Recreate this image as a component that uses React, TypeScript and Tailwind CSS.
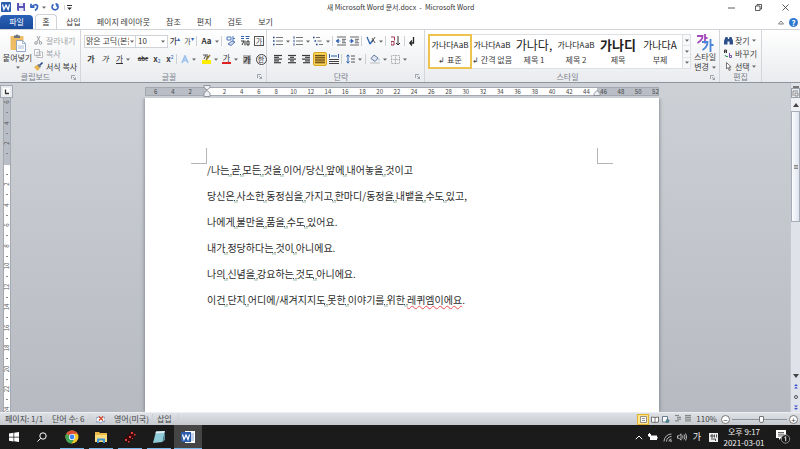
import type { ReactNode } from 'react'

const BODY_LINES = [
  '/나는 곧 모든 것을 이어/당신 앞에 내어놓을 것이고',
  '당신은 사소한 동정심을 가지고 한마디/동정을 내뱉을 수도 있고,',
  '나에게 불만을 품을 수도 있어요.',
  '내가 정당하다는 것이 아니에요.',
  '나의 신념을 강요하는 것도 아니에요.',
  '이건 단지 어디에/새겨지지도 못한 이야기를 위한 레퀴엠이에요.',
]

const TABS = ['삽입', '페이지 레이아웃', '참조', '편지', '검토', '보기']

const STYLES = [
  { sample: '가나다AaB', name: '↲ 표준', look: 'text-[8px]' },
  { sample: '가나다AaB', name: '↲ 간격 없음', look: 'text-[8px]' },
  { sample: '가나다,', name: '제목 1', look: 'text-[12px]' },
  { sample: '가나다AaB', name: '제목 2', look: 'text-[8px]' },
  { sample: '가나디', name: '제목', look: 'text-[13px] font-bold' },
  { sample: '가나다A', name: '부제', look: 'text-[10px]' },
]

const H_MARKS = Array.from({ length: 30 }, (_, i) => Math.abs(i * 2 - 6))
const V_MARKS = [6, 4, 2, 0, 2, 4, 6, 8, 10, 12, 14, 16, 18, 20, 22, 24]

function Caret() {
  return (
    <svg viewBox="0 0 4 3" className="h-[3px] w-1 shrink-0 fill-[#666]">
      <path d="M0 .5h4L2 2.8z" />
    </svg>
  )
}

function Sep() {
  return <span className="h-2.5 w-px shrink-0 bg-[#cdd0d5]" />
}

function Tool({ label, size = 'w-3.5', caret, children }: { label: string; size?: string; caret?: boolean; children: ReactNode }) {
  return (
    <button aria-label={label} className={`flex h-3.5 shrink-0 items-center justify-center gap-[3px] ${size}`}>
      {children}
      {caret && <Caret />}
    </button>
  )
}

function Group({ title, size, launcher = true, children }: { title: string; size: string; launcher?: boolean; children: ReactNode }) {
  return (
    <section className={`flex shrink-0 flex-col border-r border-[#d3d6da] ${size}`}>
      <div className="h-[42px] pt-1">{children}</div>
      <div className="flex h-[11px] items-center text-[#7a808a]">
        <span className="flex-1 text-center">{title}</span>
        {launcher && (
          <button aria-label={`${title} 옵션`} className="pr-1">
            <svg viewBox="0 0 5 5" className="size-[5px] fill-none stroke-[#8b929c]" strokeWidth=".8">
              <path d="M.5 4V.5H4M2 2l2.5 2.5M4.5 2.5v2h-2" />
            </svg>
          </button>
        )}
      </div>
    </section>
  )
}

function Lines({ rows, color = 'stroke-[#3c3c3c]' }: { rows: [number, number][]; color?: string }) {
  return (
    <svg viewBox="0 0 10 10" className={`size-2.5 ${color}`} strokeWidth="1.2">
      {rows.map(([a, b], i) => (
        <path key={i} d={`M${a} ${1.5 + i * 1.8}H${b}`} />
      ))}
    </svg>
  )
}

function ListIcon({ kind }: { kind: 'bullet' | 'number' | 'multi' }) {
  return (
    <svg viewBox="0 0 10 10" className="size-2.5" strokeWidth="1">
      {[1.5, 5, 8.5].map((y, i) => {
        const x = kind === 'multi' ? i * 1.5 : 0
        return (
          <g key={y}>
            {kind === 'number' ? (
              <path d={`M1 ${y - 1.2}v2.4`} stroke="#31528f" />
            ) : (
              <rect x={x} y={y - 0.8} width="1.6" height="1.6" fill="#31528f" />
            )}
            <path d={`M${x + 3} ${y}H${kind === 'multi' ? x + 7 : 10}`} stroke="#777" />
          </g>
        )
      })}
    </svg>
  )
}

function IndentIcon({ right }: { right?: boolean }) {
  return (
    <svg viewBox="0 0 11 10" className="h-2.5 w-[11px]">
      <path d="M1 1h9M6 3.300h4M6 5h3M6 6.800h4M1 9h9" stroke="#555" strokeWidth=".9" />
      <path d={right ? 'M0 5h3M2 3l2.5 2L2 7z' : 'M4.5 5h-2M2.5 3L0 5l2.5 2z'} stroke="#2b5fb0" strokeWidth=".6" fill="#2b5fb0" />
    </svg>
  )
}

function QuickAccess() {
  return (
    <div className="flex w-60 items-center gap-[5px]">
      <svg viewBox="0 0 10 10" className="size-2.5">
        <rect width="10" height="10" rx="1" fill="#2a5db0" />
        <path d="M1.5 2.5l1.4 5L5 3.2l2.1 4.3 1.4-5" fill="none" stroke="#fff" strokeWidth="1.2" />
      </svg>
      <button aria-label="저장" className="ml-px">
        <svg viewBox="0 0 8 8" className="size-2">
          <path d="M0 0h8v8H1L0 7z" fill="#5a55b5" />
          <path d="M2 0h4v3H2zM2 5h4.500v3H2z" fill="#e5e8f8" />
        </svg>
      </button>
      <button aria-label="실행 취소" className="flex items-center gap-[3px]">
        <svg viewBox="0 0 9 8" className="h-2 w-[9px] fill-none stroke-[#3263bd]" strokeWidth="1.7">
          <path d="M1.500 4Q6 0 7.500 3Q8 5.500 5 7.500M1 .8V4.200H4.500" />
        </svg>
        <Caret />
      </button>
      <button aria-label="다시 실행">
        <svg viewBox="0 0 8 8" className="size-2 fill-none stroke-[#3263bd]" strokeWidth="1.6">
          <path d="M2.500 1.300A3 3 0 1 0 6 1.500M4.500 .5L6.500 1.500L5.500 3.500" />
        </svg>
      </button>
      <button aria-label="도구 모음 사용자 지정" className="border-l border-[#cdd0d5] pl-0.5">
        <svg viewBox="0 0 5 5" className="size-[5px] fill-[#333]">
          <path d="M0 0h5v1H0zM0 2.500h5L2.500 5z" />
        </svg>
      </button>
    </div>
  )
}

function TitleBar() {
  return (
    <header className="flex h-3.5 items-center justify-between pl-px">
      <QuickAccess />
      <h1 className="text-[7px] text-[#333]">새 Microsoft Word 문서.docx &nbsp;- &nbsp;Microsoft Word</h1>
      <div className="flex w-60 items-center justify-end gap-5 pr-[11px]">
        <button aria-label="최소화">
          <svg viewBox="0 0 7 7" className="size-[7px] stroke-[#333]"><path d="M0 4h7" strokeWidth=".8" /></svg>
        </button>
        <button aria-label="이전 크기로 복원">
          <svg viewBox="0 0 7 7" className="size-[7px] fill-none stroke-[#333]" strokeWidth=".8">
            <path d="M.5 2h4.500v4.500H.5zM2 2V.5h4.500V5H5" />
          </svg>
        </button>
        <button aria-label="닫기">
          <svg viewBox="0 0 7 7" className="size-[7px] stroke-[#333]" strokeWidth=".8"><path d="M.5 .5l6 6M6.500 .5l-6 6" /></svg>
        </button>
      </div>
    </header>
  )
}

function TabRow() {
  return (
    <nav className="flex h-[15px] items-end">
      <button className="h-3.5 w-[33px] rounded-t-sm bg-linear-to-b from-[#2a62b8] to-[#1b4a9b] text-white">파일</button>
      <button className="ml-0.5 h-[15px] w-[22px] rounded-t-sm border border-b-0 border-[#cfd2d6] bg-white">홈</button>
      <div className="ml-[9px] flex h-3.5 items-center gap-4">
        {TABS.map((tab) => (
          <button key={tab}>{tab}</button>
        ))}
      </div>
      <div className="ml-auto flex h-3.5 items-center gap-[5px] pr-0.5">
        <button aria-label="리본 최소화">
          <svg viewBox="0 0 6 5" className="h-[5px] w-1.5 fill-none stroke-[#666]" strokeWidth=".8"><path d="M.5 4L3 1l2.500 3z" /></svg>
        </button>
        <button aria-label="도움말" className="size-[9px] rounded-full bg-[#2f78cf] text-[8px] leading-[9px] font-bold text-white">?</button>
      </div>
    </nav>
  )
}

function Clipboard() {
  return (
    <Group title="클립보드" size="w-[81px]">
      <div className="flex gap-0.5 pl-[3px]">
        <button className="flex w-[29px] flex-col items-center">
          <svg viewBox="0 0 16 18" className="h-[18px] w-4">
            <rect x=".5" y="2" width="13" height="14" rx="1" fill="#eebc62" />
            <path d="M4 3V1.500h1.500Q7 -.5 8.500 1.500H10V4H4z" fill="#6d7480" />
            <path d="M6.500 6.500h6l3 3V17.500h-9z" fill="#fff" stroke="#7b93ba" strokeWidth=".8" />
            <path d="M12.500 6.500v3h3M8 12h6M8 14h6" fill="none" stroke="#8fa8cf" strokeWidth=".8" />
          </svg>
          <span className="mt-px mb-[3px] whitespace-nowrap">붙여넣기</span>
          <Caret />
        </button>
        <div className="flex flex-col text-[#a0a4aa]">
          <button className="flex h-[13px] items-center gap-[3px]">
            <svg viewBox="0 0 9 9" className="size-[9px] fill-none stroke-[#9a9ea4]">
              <path d="M3 0l3 6M6 0L3 6" /><circle cx="2" cy="7" r="1.300" /><circle cx="6.500" cy="7" r="1.300" />
            </svg>
            잘라내기
          </button>
          <button className="flex h-[13px] items-center gap-[3px]">
            <svg viewBox="0 0 9 9" className="size-[9px] fill-white stroke-[#a5a9af]" strokeWidth=".8">
              <path d="M.5 .5h5v6h-5zM3 3h5.500v5.500H3zM4.500 5h2.500M4.500 6.500h2.500" />
            </svg>
            복사
          </button>
          <button className="flex h-[13px] items-center gap-[3px] text-[#333]">
            <svg viewBox="0 0 9 9" className="size-[9px]">
              <path d="M0 5l3-2 3 3-2.500 3z" fill="#e9b44c" /><path d="M3 3l2-1 2 2-1 2z" fill="#6b7380" /><path d="M6 3L8.500 .5" stroke="#2d4f8e" strokeWidth="1.600" />
            </svg>
            서식 복사
          </button>
        </div>
      </div>
    </Group>
  )
}

function FontGroup() {
  return (
    <Group title="글꼴" size="w-[186px]">
      <div className="flex flex-col gap-1 pl-[3px]">
        <div className="flex items-center">
          <label className="flex h-[13px] w-[52px] items-center justify-between border border-[#cfd2d6] bg-white pr-px">
            <select aria-label="글꼴" className="w-11 appearance-none overflow-hidden pl-px whitespace-nowrap outline-none">
              <option>맑은 고딕(본문)</option>
            </select>
            <Caret />
          </label>
          <label className="flex h-[13px] w-8 items-center border border-l-0 border-[#cfd2d6] bg-white">
            <select aria-label="글꼴 크기" className="w-[25px] appearance-none pl-0.5 outline-none">
              <option>10</option>
            </select>
            <Caret />
          </label>
          <Tool label="글꼴 크게"><b className="font-medium">가</b><span className="-ml-[3px] pb-1 text-[6px] text-[#2b5fb0]">▴</span></Tool>
          <Tool label="글꼴 작게"><span className="text-[7px]">가</span><span className="-ml-[3px] pb-1 text-[6px] text-[#2b5fb0]">▾</span></Tool>
          <Sep />
          <Tool label="대/소문자 바꾸기" size="ml-0.5 w-[22px]" caret><b>Aa</b></Tool>
          <Sep />
          <Tool label="서식 지우기" size="ml-0.5 w-3.5">
            <svg viewBox="0 0 10 10" className="size-2.5 fill-none" strokeWidth="1">
              <path d="M1 1h4v3H1zM7 0v5M7 2.500h2" stroke="#4a76c0" /><path d="M2 8l4-3 3 1-4 3.500z" fill="#cfdcf3" stroke="#5577b0" />
            </svg>
          </Tool>
          <Tool label="윗주 달기">
            <svg viewBox="0 0 10 10" className="size-2.5 fill-none" strokeWidth="1">
              <path d="M1 .5h3M5.500 .5h4M1 2.500h3M6 2.500h3" stroke="#2b5fb0" /><path d="M1 5h3L2 9M5 4.500v5M7 5h2v4H7z" stroke="#333" />
            </svg>
          </Tool>
          <Tool label="문자 테두리"><span className="size-2.5 border border-[#555] text-center text-[7px] leading-[8px]">가</span></Tool>
        </div>
        <div className="flex items-center">
          <Tool label="굵게"><b>가</b></Tool>
          <Tool label="기울임꼴"><i>가</i></Tool>
          <Tool label="밑줄" size="w-[22px]" caret><span className="border-b border-[#333] leading-[8px]">가</span></Tool>
          <Tool label="취소선" size="ml-0.5 w-3.5"><s className="text-[6px] font-bold">abc</s></Tool>
          <Tool label="아래 첨자"><b>x</b><span className="-ml-[3px] pt-1 text-[5px] text-[#2b5fb0]">2</span></Tool>
          <Tool label="위 첨자" size="w-3"><b>x</b><span className="-ml-[3px] pb-1 text-[5px] text-[#2b5fb0]">2</span></Tool>
          <Sep />
          <Tool label="텍스트 효과" size="w-[23px]" caret>
            <svg viewBox="0 0 8 9" className="h-[9px] w-2 fill-none" stroke="#9cc2ec" strokeWidth="1.700"><path d="M1 8L4 1l3 7M2 5.500h4" /></svg>
          </Tool>
          <Tool label="강조 색" size="w-5" caret>
            <svg viewBox="0 0 9 10" className="h-2.5 w-[9px]">
              <path d="M0 6h9v4H0z" fill="#ffed00" /><path d="M1 1h3L2 5M5 0v5M5 2.500h2" fill="none" stroke="#555" /><path d="M4 6l4-5" stroke="#8a7a30" strokeWidth="1.500" />
            </svg>
          </Tool>
          <Tool label="글꼴 색" size="w-5" caret><span className="border-b-2 border-[#e02020] px-px leading-[8px]">가</span></Tool>
          <Tool label="문자 음영"><span className="bg-[#b5b5b5] font-bold leading-[9px]">가</span></Tool>
          <Tool label="원 문자"><span className="size-[11px] rounded-full border border-[#444] text-center text-[7px] leading-[9px]">한</span></Tool>
        </div>
      </div>
    </Group>
  )
}

function ParagraphGroup() {
  return (
    <Group title="단락" size="w-[158px]">
      <div className="flex flex-col gap-1 pl-1">
        <div className="flex items-center">
          <Tool label="글머리 기호" size="w-5" caret><ListIcon kind="bullet" /></Tool>
          <Tool label="번호 매기기" size="w-5" caret><ListIcon kind="number" /></Tool>
          <Tool label="다단계 목록" size="w-[21px]" caret><ListIcon kind="multi" /></Tool>
          <Sep />
          <Tool label="내어쓰기" size="ml-0.5 w-[13px]"><IndentIcon /></Tool>
          <Tool label="들여쓰기" size="w-[13px]"><IndentIcon right /></Tool>
          <Sep />
          <Tool label="아시아식 레이아웃" size="ml-0.5 w-[21px]" caret>
            <svg viewBox="0 0 10 10" className="size-2.5 fill-none"><path d="M1 1l3 7M7 4L4 8" stroke="#2b5fb0" strokeWidth="1.300" /><path d="M6 2l3 5M9 1L6 6" stroke="#555" /></svg>
          </Tool>
          <Sep />
          <Tool label="정렬" size="w-[18px]">
            <svg viewBox="0 0 9 10" className="h-2.5 w-[9px] fill-none"><path d="M0 1h3.500v3.500M0 5.500h3v3.500H0z" stroke="#a2344f" /><path d="M7 0v9M5 7l2 2 2-2" stroke="#333" /></svg>
          </Tool>
          <Sep />
          <Tool label="편집 기호 표시">
            <svg viewBox="0 0 6 9" className="h-[9px] w-1.5 fill-none stroke-[#222]"><path d="M4.500 0v6H1M3 3.500L.8 6 3 8.500" strokeWidth="1.300" /></svg>
          </Tool>
        </div>
        <div className="flex items-center">
          <Tool label="왼쪽 맞춤"><Lines rows={[[1, 9], [1, 6], [1, 9], [1, 6], [1, 8]]} /></Tool>
          <Tool label="가운데 맞춤"><Lines rows={[[1, 9], [3, 7], [1, 9], [3, 7], [1, 9]]} /></Tool>
          <Tool label="오른쪽 맞춤"><Lines rows={[[1, 9], [4, 9], [1, 9], [4, 9], [2, 9]]} /></Tool>
          <button aria-label="양쪽 맞춤" aria-pressed="true" className="flex h-3.5 w-3.5 items-center justify-center rounded-xs border border-[#d9a520] bg-[#ffd45c]">
            <Lines rows={[[0, 10], [0, 10], [0, 10], [0, 10], [0, 10]]} color="stroke-[#6b4e12]" />
          </button>
          <Tool label="균등 분할">
            <svg viewBox="0 0 10 10" className="size-2.5 fill-none"><path d="M.5 0v4M9.500 0v4M2 2h6" stroke="#2b5fb0" /><path d="M0 5.500h10M0 7.500h10M0 9.500h10" stroke="#444" /></svg>
          </Tool>
          <Sep />
          <Tool label="줄 간격" size="ml-px w-[22px]" caret>
            <svg viewBox="0 0 9 10" className="h-2.5 w-[9px] fill-none"><path d="M2 1v8M.5 2.500L2 .8l1.500 1.700M.5 7.500L2 9.200l1.500-1.700" stroke="#2b5fb0" /><path d="M5 2h4M5 5h4M5 8h4" stroke="#555" /></svg>
          </Tool>
          <Sep />
          <Tool label="음영" size="ml-px w-[22px]" caret>
            <svg viewBox="0 0 10 10" className="size-2.5"><path d="M4 1l4 3-3 3.500-4-3z" fill="#dfe6f2" stroke="#44608f" strokeWidth=".8" /><path d="M8.500 4q1.500 2 .5 3z" fill="#2b5fb0" /><path d="M0 8.500h10v1H0z" fill="#b9bdc4" /></svg>
          </Tool>
          <Tool label="테두리" size="w-5" caret>
            <svg viewBox="0 0 9 9" className="size-[9px] fill-none stroke-[#999]" strokeWidth=".8" strokeDasharray="1 .6"><path d="M.5 .5h8v8h-8zM4.500 0v9M0 4.500h9" /></svg>
          </Tool>
        </div>
      </div>
    </Group>
  )
}

function StyleGroup() {
  return (
    <Group title="스타일" size="w-[295px]">
      <div className="flex pl-[3px]">
        <div className="flex h-[35px] w-[263px] border border-[#dcdfe3] bg-white">
          {STYLES.map((style, i) => (
            <button
              key={i}
              className={`flex w-[42px] shrink-0 flex-col items-center whitespace-nowrap ${i === 0 ? 'outline-2 -outline-offset-1 outline-[#edc34e]' : ''}`}
            >
              <span className={`h-[19px] leading-[20px] text-[#222] ${style.look}`}>{style.sample}</span>
              <span className="leading-[12px]">{style.name}</span>
            </button>
          ))}
          <div className="ml-auto flex w-2 shrink-0 flex-col border-l border-[#dcdfe3]">
            {['이전 행', '다음 행', '자세히'].map((name) => (
              <button key={name} aria-label={name} className="flex flex-1 items-center justify-center border-b border-[#e4e6e9] bg-[#f7f8fa] last:border-b-0">
                <Caret />
              </button>
            ))}
          </div>
        </div>
        <button className="flex w-7 flex-col items-center">
          <svg viewBox="0 0 18 18" className="size-[18px] fill-none" strokeWidth="1.800">
            <path d="M1 2h5.500Q6.500 6 1.500 9M9 0v9.500M9 4h2.500" stroke="#a548bd" />
            <path d="M6 8h5.500Q11.500 13 6.500 16M14.500 5v13M14.500 11h3" stroke="#4a86d8" />
          </svg>
          <span>스타일</span>
          <span className="flex items-center gap-[3px]">변경 <Caret /></span>
        </button>
      </div>
    </Group>
  )
}

function EditGroup() {
  return (
    <Group title="편집" size="w-[42px]" launcher={false}>
      <div className="flex flex-col pl-1">
        <button className="flex h-[13px] items-center gap-0.5 whitespace-nowrap">
          <svg viewBox="0 0 9 9" className="size-[9px] shrink-0 fill-[#2e4f8a]"><path d="M1.500 1h2l.5 2h1l.5-2h2L9 5v3.500H5.500V5.500h-2v3H0V5z" /></svg>
          찾기 <Caret />
        </button>
        <button className="flex h-[13px] items-center gap-0.5 whitespace-nowrap">
          <svg viewBox="0 0 9 9" className="size-[9px] shrink-0 fill-none"><path d="M.5 4V1h2v3M.5 2.800h2" stroke="#333" /><path d="M5.500 4v4.500h2v-2h-2" stroke="#7a50b0" /><path d="M1 6q0 2 3 1.500" stroke="#2f9850" /></svg>
          바꾸기
        </button>
        <button className="flex h-[13px] items-center gap-0.5 whitespace-nowrap">
          <svg viewBox="0 0 9 9" className="size-[9px] shrink-0 fill-white stroke-[#555]" strokeWidth=".8"><path d="M2.500 .5v6.500L4 5.500l1.200 3 1.200-.5L5.200 5h2z" /></svg>
          선택 <Caret />
        </button>
      </div>
    </Group>
  )
}

function HorizontalRuler() {
  return (
    <div className="relative mt-1 h-[9px] w-[514px] border border-[#a4a9b1] bg-[linear-gradient(90deg,#b9bec6_61px,#fff_61px,#fff_451px,#b9bec6_451px)] pl-px">
      <div className="grid h-full w-[517px] grid-cols-[repeat(30,minmax(0,1fr))] text-center text-[6px] leading-[7px] text-[#444]">
        {H_MARKS.map((mark, i) => (
          <span key={i}>{mark || ''}</span>
        ))}
      </div>
      <svg viewBox="0 0 8 12" className="absolute -top-[3px] left-[57px] h-3 w-2 fill-[#eef0f3] stroke-[#7d838c]" strokeWidth=".8">
        <path d="M1 .5h6v2L4 5 1 2.500zM4 5.500l3 2.500v3.500H1V8z" />
      </svg>
      <svg viewBox="0 0 8 6" className="absolute top-0.5 left-[447px] h-1.5 w-2 fill-[#eef0f3] stroke-[#7d838c]" strokeWidth=".8">
        <path d="M4 .5l3 3v2H1v-2z" />
      </svg>
    </div>
  )
}

function VerticalRuler() {
  return (
    <div className="flex w-[15px] shrink-0 flex-col overflow-hidden pl-[3px]">
      <div className="flex min-h-0 w-2 flex-1 flex-col border-x border-[#a4a9b1] bg-[linear-gradient(#b9bec6_67px,#fff_67px)] text-[6px] text-[#555]">
        {V_MARKS.map((mark, i) => (
          <div key={i} className={`flex shrink-0 flex-col items-center ${i % 2 ? 'h-5' : 'h-[21px]'}`}>
            <span className="h-2 -rotate-90 leading-[8px]">{mark || ''}</span>
            <span className="mt-1.5 h-px w-0.5 bg-[#888]" />
          </div>
        ))}
      </div>
    </div>
  )
}

function Line({ text }: { text: string }) {
  const words = text.split(' ')
  return (
    <p>
      {words.map((word, i) => (
        <span key={i}>
          {i > 0 && (
            <span className="relative inline-block w-0.5 whitespace-pre">
              {' '}
              <svg viewBox="0 0 4 3" className="absolute bottom-1.5 -left-px h-[3px] w-1">
                <path d="M0 .5h1M2.500 .5h1" stroke="#444" />
                <path d="M0 2h4" stroke="#7fae93" strokeWidth=".8" />
              </svg>
            </span>
          )}
          {word.startsWith('레퀴엠') ? (
            <>
              <span className="underline decoration-[#e85050] decoration-wavy decoration-1 underline-offset-1">{word.slice(0, -1)}</span>.
            </>
          ) : (
            word
          )}
        </span>
      ))}
    </p>
  )
}

function Scrollbar() {
  return (
    <div className="flex w-2.5 shrink-0 flex-col items-center border-l border-[#c5c9cf] bg-[#dfe3e9]">
      <span className="mt-[3px] h-0.5 w-1.5 bg-[#777]" />
      <button aria-label="눈금자" className="flex h-2.5 w-[9px] items-center justify-center border border-[#9aa0a8] bg-[#e8ebef]">
        <svg viewBox="0 0 7 7" className="size-[7px] fill-none stroke-[#777]" strokeWidth=".8"><path d="M1 6V1h5M3 6V3h3v3z" /></svg>
      </button>
      <button aria-label="위로" className="flex h-[13px] w-full items-center justify-center bg-[#eef0f4]">
        <svg viewBox="0 0 6 4" className="h-1 w-1.5 fill-[#444]"><path d="M0 4l3-4 3 4z" /></svg>
      </button>
      <div className="flex h-[111px] w-[9px] items-center justify-center border border-[#a6adb8] bg-linear-to-r from-[#fbfcfe] to-[#dfe4ee]">
        <span className="h-1 w-1 border-y border-[#888] bg-[#bbb]" />
      </div>
      <div className="flex-1" />
      <button aria-label="아래로" className="flex h-2.5 w-full items-center justify-center">
        <svg viewBox="0 0 6 4" className="h-1 w-1.5 fill-[#444]"><path d="M0 0l3 4 3-4z" /></svg>
      </button>
      <button aria-label="이전 페이지" className="flex h-[11px] items-center">
        <svg viewBox="0 0 4 5" className="h-[5px] w-1 fill-[#4455d0]"><path d="M0 2l2-2 2 2zM0 4.500l2-2 2 2z" /></svg>
      </button>
      <button aria-label="찾아보기 개체 선택" className="flex h-2.5 items-center">
        <span className="size-1 rounded-full border border-[#555]" />
      </button>
      <button aria-label="다음 페이지" className="flex h-2.5 items-center">
        <svg viewBox="0 0 4 5" className="h-[5px] w-1 fill-[#4455d0]"><path d="M0 .5l2 2 2-2zM0 3l2 2 2-2z" /></svg>
      </button>
    </div>
  )
}

function Workspace() {
  return (
    <div className="flex min-h-0 flex-1 bg-linear-to-b from-[#cdd1d6] to-[#b7bbc1]">
      <div className="flex min-w-0 flex-1 flex-col">
        <div className="flex h-[15px] shrink-0">
          <div className="w-[15px] pt-0.5">
            <button aria-label="탭 종류" className="flex size-[13px] items-center justify-center border border-[#a4a9b1] bg-[#e9ebee]">
              <svg viewBox="0 0 7 7" className="size-[7px] bg-white fill-none stroke-[#333]" strokeWidth="1.300"><path d="M2.500 1.500v4H6" /></svg>
            </button>
          </div>
          <div className="flex flex-1 justify-center pr-px">
            <HorizontalRuler />
          </div>
        </div>
        <div className="flex min-h-0 flex-1">
          <VerticalRuler />
          <div className="flex flex-1 justify-center overflow-hidden pr-px">
            <main className="w-[514px] bg-white px-[46px] pt-[50px] shadow-[0_0_4px_#6d737b]">
              <div className="flex justify-between">
                <span className="size-4 border-r border-b border-[#b5b5b5]" />
                <span className="size-4 border-b border-l border-[#b5b5b5]" />
              </div>
              <article aria-label="본문" className="-mt-[7px] pl-4 text-[10px] leading-[26px] whitespace-nowrap text-[#2b2b2b]">
                {BODY_LINES.map((line) => (
                  <Line key={line} text={line} />
                ))}
              </article>
            </main>
          </div>
        </div>
      </div>
      <Scrollbar />
    </div>
  )
}

function StatusBar() {
  return (
    <footer className="flex h-[13px] shrink-0 items-center border-t border-[#eceef1] bg-linear-to-b from-[#dee1e5] to-[#c6cacf] text-[#444]">
      <span className="w-[46px] pl-[5px] whitespace-nowrap">페이지: 1/1</span>
      <Sep />
      <span className="w-[42px] pl-[5px] whitespace-nowrap">단어 수: 6</span>
      <Sep />
      <button aria-label="맞춤법 검사" className="w-6 pl-1.5">
        <svg viewBox="0 0 9 9" className="size-[9px]">
          <path d="M0 3q3-2 4.500 0Q6 1 9 2.500v4Q6 6 4.500 8 3 6 0 7z" fill="#f6f8fb" stroke="#6c84ad" strokeWidth=".8" />
          <path d="M3 1.500l4 4M7 1.500l-4 4" stroke="#d84a2c" strokeWidth="1.300" />
        </svg>
      </button>
      <span className="w-[38px] whitespace-nowrap">영어(미국)</span>
      <Sep />
      <span className="w-[25px] pl-1">삽입</span>
      <Sep />
      <div className="ml-auto flex items-center pr-0.5">
        <Sep />
        <button aria-label="인쇄 모양" className="mr-0.5 flex h-[11px] w-3 items-center justify-center border border-[#e3b333] bg-[#ffe48a]">
          <svg viewBox="0 0 7 7" className="size-[7px] fill-white stroke-[#777]" strokeWidth=".8"><path d="M.5 .5h6v6h-6zM2 2.500h3M2 4.500h3" /></svg>
        </button>
        <button aria-label="전체 화면 읽기" className="w-[11px]">
          <svg viewBox="0 0 8 7" className="h-[7px] w-2 fill-white stroke-[#555]" strokeWidth=".8"><path d="M.5 1L4 1.500 7.500 1v5L4 6.500.5 6zM4 1.500v5" /></svg>
        </button>
        <button aria-label="웹 모양" className="w-[11px]">
          <svg viewBox="0 0 8 7" className="h-[7px] w-2 fill-white stroke-[#4b617f]" strokeWidth=".8"><path d="M.5 .5h5v5.500h-5z" /><circle cx="5.500" cy="5" r="1.500" fill="#3e9a8d" /></svg>
        </button>
        <button aria-label="개요" className="w-2.5"><Lines rows={[[2, 6], [4, 8], [4, 8], [2, 6]]} color="stroke-[#888]" /></button>
        <button aria-label="초안" className="w-2.5"><Lines rows={[[2, 8], [2, 8], [2, 8], [2, 8]]} color="stroke-[#888]" /></button>
        <span className="w-6 text-right">110%</span>
        <div className="ml-1 flex items-center gap-0.5">
          <button aria-label="축소" className="size-[9px] rounded-full border border-[#777] bg-white text-[8px] leading-[7px]">−</button>
          <input
            type="range"
            aria-label="확대/축소"
            min={0}
            max={100}
            defaultValue={53}
            className="h-[9px] w-[55px] appearance-none bg-[linear-gradient(#8d939b,#8d939b)] bg-size-[100%_1px] bg-center bg-no-repeat [&::-webkit-slider-thumb]:h-[7px] [&::-webkit-slider-thumb]:w-[5px] [&::-webkit-slider-thumb]:appearance-none [&::-webkit-slider-thumb]:rounded-b-xs [&::-webkit-slider-thumb]:border [&::-webkit-slider-thumb]:border-[#777] [&::-webkit-slider-thumb]:bg-white"
          />
          <button aria-label="확대" className="size-[9px] rounded-full border border-[#777] bg-white text-[8px] leading-[7px]">+</button>
        </div>
      </div>
    </footer>
  )
}

function TaskApp({ label, active, children }: { label: string; active?: boolean; children: ReactNode }) {
  return (
    <button aria-label={label} className={`flex h-6 items-center justify-center border-b border-[#76b9ed] ${active ? 'w-7 bg-[#454545]' : 'w-6'}`}>
      {children}
    </button>
  )
}

function Taskbar() {
  return (
    <footer className="flex h-6 shrink-0 items-center bg-[#1b1b1b] text-[#eee]">
      <button aria-label="시작" className="flex w-7 justify-center">
        <svg viewBox="0 0 10 10" className="size-2.5 fill-white"><path d="M0 1.400l4.500-.6v4H0zM5.200 .7L10 0v4.800H5.200zM0 5.400h4.500v4L0 8.800zM5.200 5.400H10V10l-4.800-.7z" /></svg>
      </button>
      <button aria-label="검색" className="flex w-7 justify-center">
        <svg viewBox="0 0 10 10" className="size-2.5 fill-none stroke-white"><circle cx="6" cy="4" r="3.200" /><path d="M3.700 6.300L.5 9.500" /></svg>
      </button>
      <div className="ml-1 flex gap-[5px]">
        <TaskApp label="Chrome">
          <svg viewBox="0 0 14 14" className="size-3.5">
            <circle cx="7" cy="7" r="6.500" fill="#f6c62d" />
            <path d="M7 7L1.400 3.700A6.500 6.500 0 0 1 12.600 3.800H7z" fill="#dd4b3a" />
            <path d="M7 7L1.400 3.700A6.500 6.500 0 0 0 6.500 13.500L9.800 8.500z" fill="#3fa557" />
            <circle cx="7" cy="7" r="3.100" fill="#fff" /><circle cx="7" cy="7" r="2.400" fill="#4285f4" />
          </svg>
        </TaskApp>
        <TaskApp label="파일 탐색기">
          <svg viewBox="0 0 14 12" className="h-3 w-3.5">
            <path d="M1 1h4l1 1h7v9H1z" fill="#e9b949" /><path d="M1 4h12v7H1z" fill="#fbdc7c" /><path d="M3 12V7.500h8V12H9V9.500H5V12z" fill="#3d93d8" />
          </svg>
        </TaskApp>
        <TaskApp label="게임">
          <svg viewBox="0 0 14 14" className="size-3.5">
            <path d="M1 9L9 1l4 4-8 8z" fill="#3a0909" />
            <path d="M8 2h2v2H8zM11 4h1.500v1.500H11zM6 6h2v2H6zM2 9h2v2H2zM5 11h1.500v1.500H5zM9 8h1v1H9z" fill="#e0403c" />
          </svg>
        </TaskApp>
        <TaskApp label="메모장">
          <svg viewBox="0 0 14 14" className="size-3.5">
            <path d="M4 1.500L13 1l-2.500 11L1 13z" fill="#8fcbd8" /><path d="M4 1.500L13 1l-.5 1.700-9 .8z" fill="#dfeef2" /><path d="M10.500 12L13 1v9z" fill="#5d8ea0" />
          </svg>
        </TaskApp>
        <div className="-ml-0.5 flex">
          <TaskApp label="Word" active>
            <svg viewBox="0 0 14 12" className="h-3 w-3.5">
              <path d="M4 0h10v12H4z" fill="#fff" /><path d="M9 3h4M9 5h4M9 7h4M9 9h4" stroke="#6a92cf" strokeWidth=".8" />
              <path d="M0 1h10v10H0z" fill="#2b5cab" /><path d="M1.500 3.500l1.500 5 2-4.500 2 4.500 1.500-5" fill="none" stroke="#fff" strokeWidth="1.200" />
            </svg>
          </TaskApp>
        </div>
      </div>
      <div className="ml-auto flex items-center gap-[5px] pr-[9px]">
        <svg viewBox="0 0 8 5" className="h-[5px] w-2 fill-none stroke-white"><path d="M.8 4.200L4 1l3.200 3.200" /></svg>
        <svg viewBox="0 0 10 8" className="h-2 w-2.5 fill-white"><path d="M2 2.500h7V7H2zM9.300 4h.7v1.500h-.7zM0 1h1V0h1v1h1v1.500L2 4H1L0 2.500z" /></svg>
        <svg viewBox="0 0 9 9" className="size-[9px] fill-none stroke-[#ddd]" strokeWidth=".8"><path d="M1 8.500A7.500 7.500 0 0 1 8.500 1M3.500 8.500a5 5 0 0 1 5-5M6 8.500A2.500 2.500 0 0 1 8.500 6" /><circle cx="8" cy="8" r=".5" /></svg>
        <svg viewBox="0 0 10 8" className="h-2 w-2.5 fill-none stroke-[#ddd]" strokeWidth=".8"><path d="M.5 2.800h1.500L4 .8v6.400L2 5.200H.5zM5.500 2.500q1 1.500 0 3M7 1.500q2 2.500 0 5M8.500 .5q2.500 3.500 0 7" /></svg>
        <span className="w-2.5 text-center text-[9px]">가</span>
        <svg viewBox="0 0 9 9" className="ml-0.5 size-[9px]"><path d="M0 0h9v9H0z" fill="#eee" /><path d="M2 2h2v2H2zM5.500 1.500v3M2 6h4.500v2M7.500 1.500v3" fill="none" stroke="#222" strokeWidth=".8" /></svg>
        <div className="w-[42px] text-center leading-[11px] whitespace-nowrap">
          <div>오후 9:17</div>
          <div>2021-03-01</div>
        </div>
        <button aria-label="알림 1개" className="ml-1.5">
          <svg viewBox="0 0 15 14" className="h-3.5 w-[15px]">
            <path d="M0 0h10v8H5L3 10V8H0z" fill="#fff" /><path d="M2 2.500h6M2 4.200h6M2 6h6" stroke="#222" strokeWidth=".7" />
            <circle cx="9.500" cy="9" r="4.200" fill="#1b1b1b" stroke="#aaa" strokeWidth=".8" /><path d="M8.500 7.500l1.200-.8v4.500" fill="none" stroke="#fff" strokeWidth=".9" />
          </svg>
        </button>
      </div>
    </footer>
  )
}

export default function App() {
  return (
    <div className="flex h-screen flex-col overflow-hidden bg-white font-['Noto_Sans_CJK_KR','Noto_Sans',sans-serif] text-[8px] leading-[10px] text-[#3b3b3b]">
      <TitleBar />
      <TabRow />
      <div className="flex h-[54px] shrink-0 overflow-hidden border-y border-t-[#d0d3d7] border-b-[#8f959d] bg-linear-to-b from-white to-[#e9ebee]">
        <Clipboard />
        <FontGroup />
        <ParagraphGroup />
        <StyleGroup />
        <EditGroup />
      </div>
      <Workspace />
      <StatusBar />
      <Taskbar />
    </div>
  )
}
